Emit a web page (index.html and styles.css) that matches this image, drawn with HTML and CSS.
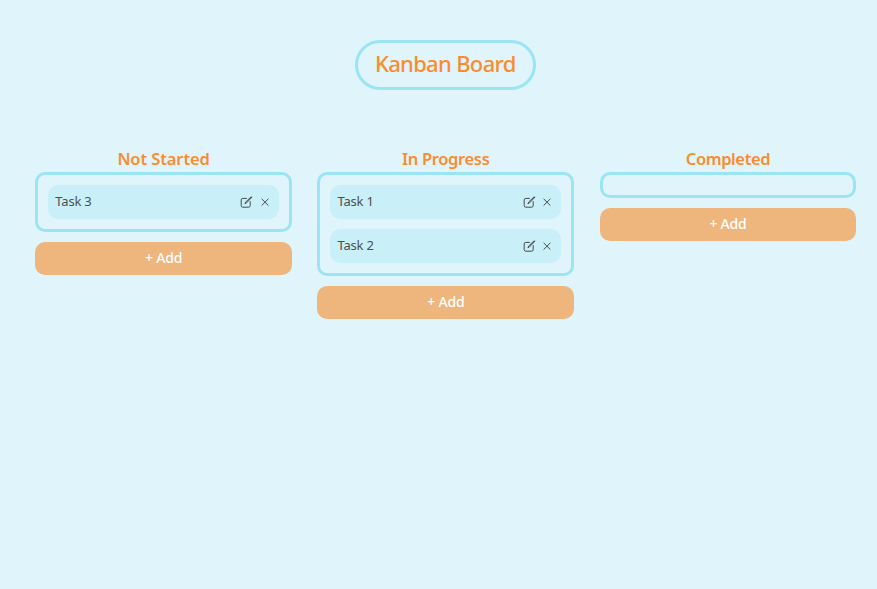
FILE: index.html
```
<!DOCTYPE html>
<html lang="en">
<head>
<meta charset="utf-8">
<title>Kanban Board</title>
<link rel="stylesheet" href="styles.css">
</head>
<body>
<svg class="defs" width="0" height="0">
  <symbol id="edit" viewBox="0 0 14 14"><path d="M7.4 3.4H3.8a1.6 1.6 0 0 0-1.6 1.6v5.6a1.6 1.6 0 0 0 1.6 1.6h5.8a1.6 1.6 0 0 0 1.6-1.6V6.6M6.2 8.5l1.3-.6 5.4-5.7M6.2 8.5l.4-1.4 5.5-5.3"/></symbol>
  <symbol id="close" viewBox="0 0 14 14"><path d="M3.9 4.1l6.2 6.2M10.1 4.1l-6.2 6.2"/></symbol>
</svg>
<header><h1>Kanban Board</h1></header>
<main class="board">
  <section class="column">
    <h2 class="not-started">Not Started</h2>
    <div class="list">
      <div class="task"><span>Task 3</span><svg class="icon"><use href="#edit"/></svg><svg class="icon"><use href="#close"/></svg></div>
    </div>
    <button>+ Add</button>
  </section>
  <section class="column">
    <h2 class="in-progress">In Progress</h2>
    <div class="list">
      <div class="task"><span>Task 1</span><svg class="icon"><use href="#edit"/></svg><svg class="icon"><use href="#close"/></svg></div>
      <div class="task"><span>Task 2</span><svg class="icon"><use href="#edit"/></svg><svg class="icon"><use href="#close"/></svg></div>
    </div>
    <button>+ Add</button>
  </section>
  <section class="column">
    <h2 class="completed">Completed</h2>
    <div class="list"></div>
    <button>+ Add</button>
  </section>
</main>
</body>
</html>
```
FILE: styles.css
```
* { box-sizing: border-box; }
body {
  margin: 0;
  min-height: 589px;
  background: #e0f5fb;
  font-family: "Noto Sans", "Open Sans", sans-serif;
  color: #4b4f50;
}
.defs { display: block; }
header {
  display: flex;
  justify-content: center;
  padding: 39.6px 0 0 13.6px;
}
h1 {
  margin: 0;
  width: 181px;
  height: 50.4px;
  border: 3px solid #9ae4f3;
  border-radius: 26px;
  color: #fb8c2e;
  font-size: 22px;
  font-weight: 500;
  letter-spacing: -0.68px;
  line-height: 41px;
  text-align: center;
  white-space: nowrap;
}
.board {
  display: grid;
  grid-template-columns: repeat(3, 256.6px);
  column-gap: 25.6px;
  align-items: start;
  padding: 58px 0 0 35.3px;
}
.column { display: flex; flex-direction: column; }
h2 {
  margin: 0;
  height: 24.2px;
  color: #fb8c2e;
  font-size: 16.5px;
  font-weight: 600;
  line-height: 21px;
  text-align: center;
}
.not-started { letter-spacing: -0.1px; }
.in-progress { letter-spacing: -0.35px; }
.completed { letter-spacing: -0.4px; }
.list {
  display: flex;
  flex-direction: column;
  gap: 10px;
  min-height: 26px;
  padding: 10px;
  border: 3px solid #9ae4f3;
  border-radius: 10px;
}
.task {
  display: flex;
  align-items: center;
  height: 34px;
  padding: 0 7px;
  border-radius: 10px;
  background: #c9eff8;
  font-size: 13px;
}
.task span {
  flex: 1;
  padding-bottom: 2px;
  letter-spacing: -0.2px;
}
.icon {
  width: 14px;
  height: 14px;
  margin-left: 4.5px;
  fill: none;
  stroke: #454b4d;
  stroke-width: 1;
  stroke-linecap: round;
  stroke-linejoin: round;
}
button {
  margin-top: 10.3px;
  height: 32.5px;
  padding: 0;
  border: 0;
  border-radius: 10px;
  background: #eeb57d;
  color: #fff;
  font: 500 14px/30px "Noto Sans", "Open Sans", sans-serif;
  letter-spacing: -0.2px;
  padding-bottom: 1px;
}
```
